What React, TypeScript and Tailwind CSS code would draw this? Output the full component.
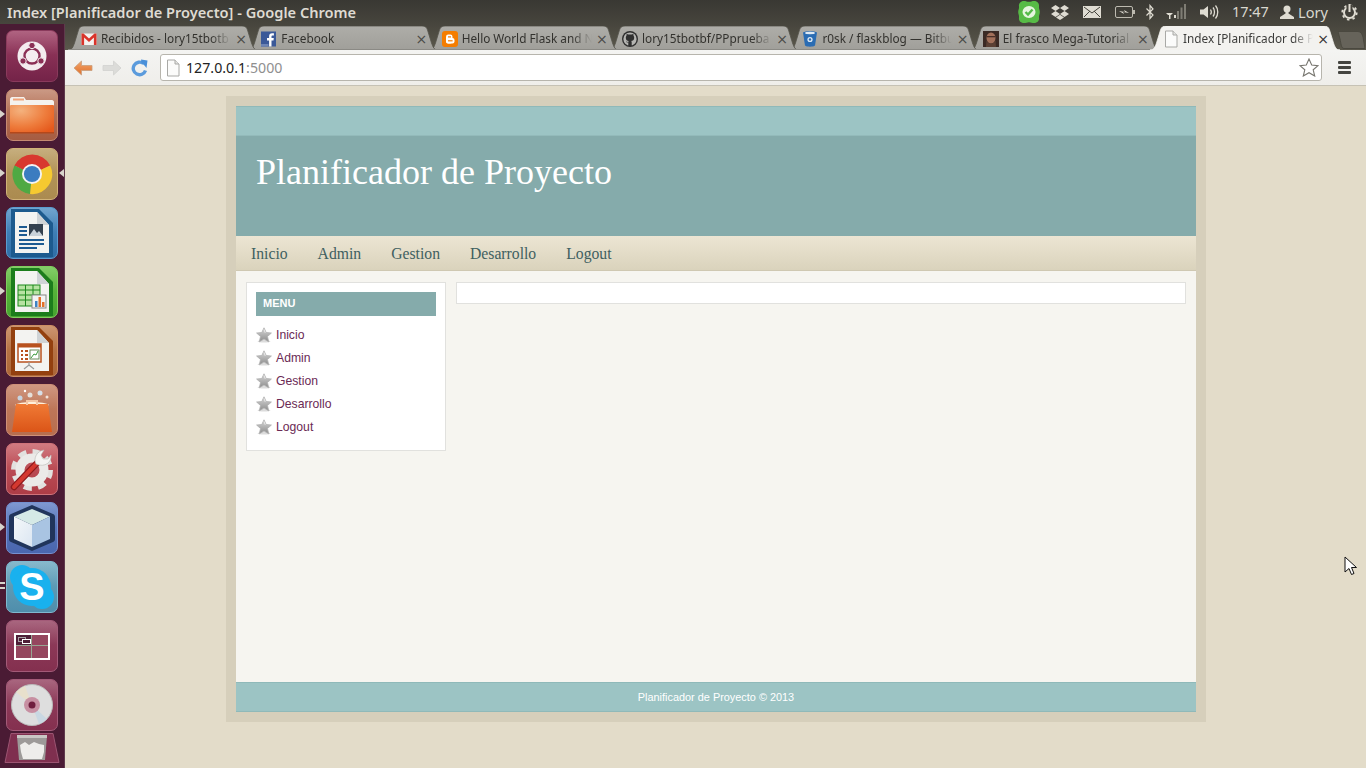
import React from "react";

const ubuntu = { fontFamily: '"Noto Sans", "Open Sans", sans-serif' };

const DocIcon = () => (
  <svg width="14" height="18" viewBox="0 0 14 18">
    <path d="M1.500 1H9l4 4v12H1.500z" fill="#fbfbfa" stroke="#a9a9a6" />
    <path d="M9 1v4h4" fill="#e4e4e2" stroke="#a9a9a6" />
  </svg>
);

const GmailIcon = () => (
  <svg width="16" height="16" viewBox="0 0 16 16">
    <rect x="0.500" y="2.500" width="15" height="11.500" fill="#f4f2f0" />
    <path d="M0.500 14V2.500h2L8 7.500l5.500-5h2V14h-2.600V6.600L8 11 3.100 6.600V14z" fill="#d9342b" />
  </svg>
);

const FacebookIcon = () => (
  <svg width="16" height="16" viewBox="0 0 16 16">
    <rect width="15" height="15" y="0.500" fill="#3b5998" />
    <path d="M10.500 15.500V9.400h2l.3-2.400h-2.300V5.600c0-.7.3-1.100 1.100-1.100h1.300V2.300c-.4 0-1-.1-1.800-.1-1.900 0-3 1.100-3 3V7H6v2.400h2.100v6.100z" fill="#fff" />
    <rect y="13" width="7.500" height="2.500" fill="#6d84b4" />
  </svg>
);

const BloggerIcon = () => (
  <svg width="16" height="16" viewBox="0 0 16 16">
    <rect width="16" height="16" rx="3" fill="#f57d00" />
    <rect x="4" y="3.500" width="6.500" height="9" rx="2.200" fill="#fff" />
    <rect x="4" y="7" width="8.500" height="5.500" rx="2" fill="#fff" />
    <rect x="6" y="5.300" width="3" height="1.200" fill="#f57d00" />
    <rect x="6" y="9.200" width="4.600" height="1.200" fill="#f57d00" />
  </svg>
);

const GithubIcon = () => (
  <svg width="16" height="16" viewBox="0 0 16 16">
    <circle cx="8" cy="8" r="8" fill="#2f2f2f" />
    <circle cx="8" cy="8" r="6.600" fill="#b5b5b2" />
    <path d="M3.800 6.800c0-1 .3-1.600.7-2.100-.1-.5-.1-1.200.2-1.800.8 0 1.400.4 1.800.7.9-.2 2-.2 3 0 .4-.3 1-.7 1.800-.7.3.6.3 1.300.2 1.800.4.5.7 1.100.7 2.100 0 2.300-1.400 3.100-3 3.300.3.300.5.700.5 1.300V15H6.300v-3.600C5.100 11.700 4.400 11 4 10.400l1.200.4c.4.300.8.600 1.100.2 0-.4.200-.7.400-.9-1.600-.2-2.900-1-2.900-3.300z" fill="#2f2f2f" />
  </svg>
);

const BitbucketIcon = () => (
  <svg width="16" height="18" viewBox="0 0 16 18">
    <path d="M1 2.500C3 .8 13 .8 15 2.500l-2 13c-1.500 1.600-8.500 1.600-10 0z" fill="#2a6cb3" />
    <ellipse cx="8" cy="3" rx="5" ry="1.200" fill="#dfeaf4" />
    <circle cx="8" cy="9.500" r="2.600" fill="#dfeaf4" />
    <circle cx="8" cy="9.500" r="1.200" fill="#2a6cb3" />
  </svg>
);

const PhotoIcon = () => (
  <svg width="16" height="16" viewBox="0 0 16 16">
    <rect width="16" height="16" fill="#3b2a24" />
    <ellipse cx="8" cy="7" rx="4.500" ry="5.500" fill="#a2705a" />
    <rect x="3.500" y="5" width="9" height="1.300" fill="#4a3028" />
    <path d="M3.500 9c1 5 8 5 9 0l.5 7H3z" fill="#5b4034" />
  </svg>
);

const tabs = [
  { title: "Recibidos - lory15tbotb", icon: <GmailIcon /> },
  { title: "Facebook", icon: <FacebookIcon /> },
  { title: "Hello World Flask and N", icon: <BloggerIcon /> },
  { title: "lory15tbotbf/PPprueba", icon: <GithubIcon /> },
  { title: "r0sk / flaskblog — Bitbu", icon: <BitbucketIcon /> },
  { title: "El frasco Mega-Tutorial", icon: <PhotoIcon /> },
];

const TabShape = ({ active }: { active?: boolean }) => (
  <svg className="absolute inset-0" width="190" height="24" viewBox="0 0 190 24">
    <defs>
      <linearGradient id="tabIdle" x1="0" y1="0" x2="0" y2="1">
        <stop offset="0" stopColor="#aeada8" />
        <stop offset="1" stopColor="#a09f9a" />
      </linearGradient>
    </defs>
    <path
      d="M0 24C4 24 5 21 6.500 17L10.500 4C11.500 1 13 0 16 0H174C177 0 178.500 1 179.500 4L183.500 17C185 21 186 24 190 24Z"
      fill={active ? "#f3f2ef" : "url(#tabIdle)"}
      stroke={active ? "#f3f2ef" : "#56544b"}
      strokeWidth="0.800"
    />
    {!active && <rect x="0" y="23" width="190" height="1" fill="#8b8a85" />}
  </svg>
);

const Tab = ({ title, icon, index, active }: { title: string; icon: React.ReactNode; index: number; active?: boolean }) => (
  <div className="relative w-[190px] h-[24px] shrink-0 -ml-[9.67px] first:ml-0" style={{ zIndex: active ? 20 : 10 - index }}>
    <TabShape active={active} />
    <div className="relative h-full flex items-center pl-[13px] pr-[11px] pt-[1px]">
      <div className="w-[16px] h-[18px] flex items-center justify-center shrink-0">{icon}</div>
      <span
        style={ubuntu}
        className={`ml-[4px] w-[134px] text-[11.800px] whitespace-nowrap overflow-hidden [mask-image:linear-gradient(to_right,black_82%,transparent_97%)] ${active ? "text-[#3c3c3a]" : "text-[#33322e]"}`}
      >
        {title}
      </span>
      <span className={`ml-auto text-[14px] leading-none ${active ? "text-[#333]" : "text-[#4a4a47]"}`} style={{ fontFamily: '"DejaVu Sans", sans-serif' }}>
        ×
      </span>
    </div>
  </div>
);

const StatusIcons = () => (
  <div className="flex items-center h-full ml-auto">
    <svg width="22" height="24" viewBox="0 0 22 24">
      <path d="M6 1c2 0 3 .8 5 .8S14 1 16 1c3.500 0 5.500 2.500 5 5.500-.3 2 .8 3.500.8 5.500s-1 3.500-.8 5.500c.5 3-1.500 5.500-5 5.500-2 0-3-.8-5-.8S8 23 6 23c-3.500 0-5.500-2.500-5-5.500.3-2-.8-3.500-.8-5.500S1.300 8.500 1 6.500C.5 3.500 2.500 1 6 1z" fill="#57bb46" />
      <ellipse cx="11" cy="12" rx="6.500" ry="6" fill="#e6f5df" />
      <path d="M7.500 12l2.500 2.500 4.500-5" fill="none" stroke="#54b948" strokeWidth="2.400" />
    </svg>
    <svg className="ml-[11px]" width="18" height="16" viewBox="0 0 18 16">
      <path d="M4.500 1L9 4 4.500 7 0 4zM13.500 1L18 4l-4.500 3L9 4zM4.500 7L9 10l-4.500 3L0 10zM13.500 7L18 10l-4.500 3L9 10zM9 10.800L13 13.500 9 16 5 13.500z" fill="#dfdcd2" />
    </svg>
    <svg className="ml-[14px]" width="18" height="12" viewBox="0 0 18 12">
      <rect width="18" height="12" fill="#dfdcd2" />
      <path d="M1 1l8 6 8-6M1 11l6-6M17 11l-6-6" stroke="#45433b" fill="none" />
    </svg>
    <svg className="ml-[14px]" width="20" height="12" viewBox="0 0 20 12">
      <rect x="0.500" y="0.500" width="17" height="11" rx="1.500" fill="none" stroke="#bdbab0" />
      <rect x="18" y="4" width="2" height="4" fill="#bdbab0" />
      <path d="M4 5l6 1-1-2 5 3-6-1 1 2z" fill="#dfdcd2" />
    </svg>
    <svg className="ml-[11px]" width="8" height="16" viewBox="0 0 8 16">
      <path d="M0.500 4.500L7 11l-3 3.500V1.500L7 5 .5 11.500" fill="none" stroke="#dfdcd2" strokeWidth="1.200" />
    </svg>
    <svg className="ml-[12px]" width="20" height="16" viewBox="0 0 20 16">
      <rect x="8" y="11" width="2" height="3" fill="#dfdcd2" />
      <path d="M0 9h7L5 11H2z" fill="#dfdcd2" />
      <rect x="3" y="11" width="1.500" height="4" fill="#dfdcd2" />
      <rect x="11" y="7" width="2" height="8" fill="#7f7d74" />
      <rect x="14.500" y="3.500" width="2" height="11.500" fill="#7f7d74" />
      <rect x="18" y="0" width="2" height="15" fill="#7f7d74" />
    </svg>
    <svg className="ml-[14px]" width="20" height="16" viewBox="0 0 20 16">
      <path d="M0 5.500h3.500L8 2v12l-4.500-3.500H0z" fill="#dfdcd2" />
      <path d="M10.500 5.500c1 1.500 1 3.500 0 5M13 3.500c2 2.500 2 6.500 0 9M15.500 1.500c3 3.500 3 9.500 0 13" fill="none" stroke="#dfdcd2" strokeWidth="1.300" />
    </svg>
    <span style={ubuntu} className="ml-[12px] w-[37px] text-[14.400px] leading-none text-[#d9d8cf] whitespace-nowrap">17:47</span>
    <svg className="ml-[11px]" width="14" height="14" viewBox="0 0 14 14">
      <circle cx="7" cy="4" r="3.500" fill="#dfdcd2" />
      <path d="M5.500 7h3v1.500L14 12v2H0v-2l5.500-3.500z" fill="#dfdcd2" />
    </svg>
    <span style={ubuntu} className="ml-[4px] w-[31px] text-[14.600px] leading-none text-[#d9d8cf] whitespace-nowrap">Lory</span>
    <svg className="ml-[12px] mr-[8px]" width="17" height="17" viewBox="0 0 17 17">
      <circle cx="8.500" cy="8.500" r="5.500" fill="none" stroke="#dfdcd2" strokeWidth="2" />
      <circle cx="8.500" cy="8.500" r="7.200" fill="none" stroke="#dfdcd2" strokeWidth="1.800" strokeDasharray="2.500 3.150" />
      <rect x="5.500" y="1" width="6" height="4" fill="#45433b" />
      <rect x="7.500" y="0" width="2" height="8" fill="#dfdcd2" />
    </svg>
  </div>
);

const Toolbar = () => (
  <div className="h-[36px] bg-linear-to-b from-[#f4f4f2] to-[#efeeea] border-b border-[#c6c2b5] flex items-center">
    <svg className="ml-[8px]" width="20" height="18" viewBox="0 0 20 18">
      <defs>
        <linearGradient id="backArrow" x1="0" y1="0" x2="0" y2="1">
          <stop offset="0" stopColor="#f2a56c" />
          <stop offset="1" stopColor="#e0702a" />
        </linearGradient>
      </defs>
      <path d="M8.500 2L1 9l7.500 7v-4.500H19v-5H8.500z" fill="url(#backArrow)" stroke="#c9a07e" strokeWidth="0.800" strokeLinejoin="round" />
    </svg>
    <svg className="ml-[9px]" width="20" height="18" viewBox="0 0 20 18">
      <path d="M11.500 2L19 9l-7.500 7v-4.500H1v-5h10.500z" fill="#dcdcd9" stroke="#d2d2cf" strokeWidth="0.800" strokeLinejoin="round" />
    </svg>
    <svg className="ml-[9px]" width="18" height="18" viewBox="0 0 18 18">
      <path d="M14.500 11.500A6.300 6.300 0 1 1 12.500 4.500" fill="none" stroke="#5b9bdc" strokeWidth="3.400" />
      <path d="M10 0.500l6.500 1-1 7.500-2-2.500-3-2.500z" fill="#4a90d9" />
    </svg>
    <div className="ml-[11px] w-[1162px] h-[27px] rounded-[3px] bg-white border border-[#b7b5ad] flex items-center">
      <div className="ml-[5px]">
        <DocIcon />
      </div>
      <span style={ubuntu} className="ml-[6px] text-[14.200px] text-[#222]">
        127.0.0.1<span className="text-[#8f8f8f]">:5000</span>
      </span>
      <svg className="ml-auto mr-[2px]" width="20" height="19" viewBox="0 0 20 19">
        <path d="M10 1l2.700 6 6.300.6-4.800 4.200 1.500 6.200L10 14.700 4.300 18l1.500-6.200L1 7.600 7.300 7z" fill="#fff" stroke="#77766f" strokeWidth="1.100" />
      </svg>
    </div>
    <div className="ml-[16px] w-[13px] flex flex-col gap-[2px]">
      <div className="h-[3px] rounded-[1px] bg-[#44443f]" />
      <div className="h-[3px] rounded-[1px] bg-[#44443f]" />
      <div className="h-[3px] rounded-[1px] bg-[#44443f]" />
    </div>
  </div>
);

const Tile = ({ className, children }: { className: string; children: React.ReactNode }) => (
  <div className={`relative w-[52px] h-[52px] rounded-[7px] border flex items-center justify-center overflow-hidden shrink-0 ${className}`}>
    <div className="absolute inset-x-0 top-0 h-[24px] bg-linear-to-b from-white/20 to-transparent" />
    <div className="relative flex items-center justify-center">{children}</div>
  </div>
);

const Launcher = () => (
  <div className="relative w-[65px] shrink-0 bg-[#4a1b34] pl-[6px] pt-[6px] flex flex-col gap-[7px] border-r border-[#5f3a4c]">
    <Tile className="bg-linear-to-b from-[#9c3d62] to-[#742348] border-[#8a3a5c]">
      <svg width="32" height="32" viewBox="0 0 32 32">
        <circle cx="16" cy="16" r="14.500" fill="#f4ecef" />
        <circle cx="16" cy="16" r="7.500" fill="none" stroke="#8b2f55" strokeWidth="2.400" />
        <circle cx="16" cy="5.500" r="3.200" fill="#8b2f55" stroke="#f4ecef" />
        <circle cx="7" cy="21" r="3.200" fill="#8b2f55" stroke="#f4ecef" />
        <circle cx="25" cy="21" r="3.200" fill="#8b2f55" stroke="#f4ecef" />
      </svg>
    </Tile>
    <Tile className="bg-linear-to-b from-[#bd7f65] to-[#a65c41] border-[#c58a72]">
      <svg width="44" height="38" viewBox="0 0 44 38">
        <defs>
          <radialGradient id="folderBody" cx="0.250" cy="0.200" r="0.950">
            <stop offset="0" stopColor="#f4b27e" />
            <stop offset="0.600" stopColor="#ee7c3c" />
            <stop offset="1" stopColor="#e5591c" />
          </radialGradient>
        </defs>
        <path d="M0 3c0-1 1-2 2-2h12l2 3h26c1 0 2 1 2 2v6H0z" fill="#f4f2ee" />
        <rect x="3" y="2.500" width="11" height="2" fill="#f0a37a" />
        <rect y="9" width="44" height="28" rx="1" fill="url(#folderBody)" />
        <rect y="36" width="44" height="1.500" fill="#b5481a" />
      </svg>
    </Tile>
    <Tile className="bg-linear-to-b from-[#b89a5e] to-[#ab8b50] border-[#d0b278]">
      <svg width="42" height="42" viewBox="0 0 44 44">
        <path d="M22 22L3.600 13A21 21 0 0 1 41 13z" fill="#d8382f" />
        <path d="M22 22L3.600 13A21 21 0 0 0 20 43z" fill="#4fa943" />
        <path d="M22 22L41 13A21 21 0 0 1 20 43z" fill="#f6c930" />
        <circle cx="22" cy="22" r="10.500" fill="#f3f3f3" />
        <circle cx="22" cy="22" r="8.500" fill="#3b7cc0" />
      </svg>
    </Tile>
    <Tile className="bg-linear-to-b from-[#4f8fc4] to-[#2e6da6] border-[#5a9ccf]">
      <svg width="42" height="48" viewBox="0 0 42 48">
        <path d="M0 0h28l14 14v34H0z" fill="#1d5a8e" />
        <path d="M4 3h22l12 13v28H4z" fill="#f3f3f1" />
        <path d="M26 3l12 13H26z" fill="#cfd3d6" />
        <rect x="8" y="17" width="8" height="2" fill="#1d5a92" />
        <rect x="8" y="21" width="8" height="2" fill="#1d5a92" />
        <rect x="8" y="25" width="8" height="2" fill="#1d5a92" />
        <rect x="18" y="15" width="14" height="12" fill="#33404f" />
        <path d="M18 27l5-7 3 4 2-2 4 5z" fill="#c9d2da" />
        <rect x="8" y="30" width="25" height="2" fill="#1d5a92" />
        <rect x="8" y="34" width="25" height="2" fill="#1d5a92" />
        <rect x="8" y="38" width="18" height="2" fill="#1d5a92" />
      </svg>
    </Tile>
    <Tile className="bg-linear-to-b from-[#66c044] to-[#45a42f] border-[#7fce5f]">
      <svg width="42" height="48" viewBox="0 0 42 48">
        <path d="M0 0h28l14 14v34H0z" fill="#1c7d1c" />
        <path d="M4 3h22l12 13v28H4z" fill="#f3f3f1" />
        <path d="M26 3l12 13H26z" fill="#cfd3d6" />
        <rect x="7" y="17" width="22" height="21" fill="#b7e3a3" stroke="#1c8a1c" />
        <path d="M7 22h22M7 27h22M7 32h22M14.500 17v21M22 17v21" stroke="#1c8a1c" />
        <rect x="21" y="27" width="14" height="13" fill="#f4f4f4" stroke="#888" />
        <rect x="24" y="33" width="2.500" height="6" fill="#3f82c4" />
        <rect x="27.500" y="29" width="2.500" height="10" fill="#e2702a" />
        <rect x="31" y="34" width="2.500" height="5" fill="#e2702a" />
      </svg>
    </Tile>
    <Tile className="bg-linear-to-b from-[#c07d4f] to-[#ab6637] border-[#cd8e63]">
      <svg width="42" height="48" viewBox="0 0 42 48">
        <path d="M0 0h28l14 14v34H0z" fill="#93400f" />
        <path d="M4 3h22l12 13v28H4z" fill="#f3f3f1" />
        <path d="M26 3l12 13H26z" fill="#cfd3d6" />
        <rect x="7" y="17" width="23" height="18" fill="#fff" stroke="#b8521f" strokeWidth="1.500" />
        <rect x="7" y="17" width="23" height="3.500" fill="#b8521f" />
        <path d="M10 24h2M10 28h2M10 32h2M14 24h3M14 28h3M14 32h3" stroke="#b8521f" strokeWidth="2" />
        <rect x="19" y="23" width="9" height="9" fill="#fff" stroke="#6a8a5a" />
        <path d="M20 31l3-4 2 1 2-4" stroke="#3a9a3a" fill="none" />
        <path d="M18 35v4M18 38l-5 4M18 38l5 4" stroke="#9a9a9a" strokeWidth="1.200" />
      </svg>
    </Tile>
    <Tile className="bg-linear-to-b from-[#c47e62] to-[#b76e4e] border-[#cf9078]">
      <svg width="44" height="46" viewBox="0 0 44 46">
        <defs>
          <linearGradient id="bagBody" x1="0" y1="0" x2="0" y2="1">
            <stop offset="0" stopColor="#f07a35" />
            <stop offset="1" stopColor="#db5518" />
          </linearGradient>
        </defs>
        <circle cx="10" cy="11" r="2.500" fill="#c7d4e0" />
        <circle cx="20" cy="8" r="2.500" fill="#e5e0da" />
        <circle cx="30" cy="6" r="2.500" fill="#d8dfe6" />
        <circle cx="37" cy="10" r="1.500" fill="#f2e4da" />
        <circle cx="15" cy="4" r="1.200" fill="#fff" />
        <path d="M5 18c4-4 30-4 34 0-5 3-29 3-34 0z" fill="#fff0da" />
        <path d="M6 17h32l4 28H2z" fill="url(#bagBody)" />
        <path d="M17 18v-4h10v4" fill="none" stroke="#f3c7a6" strokeWidth="2" />
      </svg>
    </Tile>
    <Tile className="bg-linear-to-b from-[#c65a62] to-[#ae3d47] border-[#d0737a]">
      <svg width="46" height="46" viewBox="0 0 46 46">
        <circle cx="23" cy="24" r="18" fill="none" stroke="#e2e1df" strokeWidth="6" strokeDasharray="8 6.140" />
        <circle cx="23" cy="24" r="12" fill="none" stroke="#ebeae8" strokeWidth="9" />
        <path d="M5 41L30 15" stroke="#8c1a1c" strokeWidth="6.500" strokeLinecap="round" />
        <path d="M5 41L30 15" stroke="#d4382f" strokeWidth="4" strokeLinecap="round" />
        <path d="M27 18c-3-6 1-13 8-14l-3 5 2 4 5 0 3-4c1 7-6 13-15 9z" fill="#f4f4f2" stroke="#b8b8b6" strokeWidth="0.600" />
      </svg>
    </Tile>
    <Tile className="bg-linear-to-b from-[#5f7ec4] to-[#4a66ae] border-[#7590d0]">
      <svg width="46" height="48" viewBox="0 0 46 48">
        <defs>
          <linearGradient id="cubeLeft" x1="0" y1="0" x2="1" y2="1">
            <stop offset="0" stopColor="#f5f8fa" />
            <stop offset="1" stopColor="#dbe6f2" />
          </linearGradient>
        </defs>
        <path d="M23 1L44 10c1.500 .6 2 1.500 2 3v22c0 1.500-.5 2.400-2 3L23 47 2 38c-1.500-.6-2-1.500-2-3V13c0-1.500.5-2.400 2-3z" fill="#21355c" />
        <path d="M23 5L41 12.500 23 21 5 12.500z" fill="#d5e9e6" />
        <path d="M5 12.500L23 21v22L5 35z" fill="url(#cubeLeft)" />
        <path d="M41 12.500L23 21v22l18-8z" fill="#a9c4e2" />
      </svg>
    </Tile>
    <Tile className="bg-linear-to-b from-[#6aa7bf] to-[#4f8eab] border-[#7fb9cf]">
      <div className="relative w-[44px] h-[44px] flex items-center justify-center">
        <div className="absolute left-0 top-0 w-[24px] h-[24px] rounded-full bg-[#19b1ee]" />
        <div className="absolute right-0 bottom-0 w-[24px] h-[24px] rounded-full bg-[#19b1ee]" />
        <div className="absolute inset-[3px] rounded-full bg-[#19b1ee]" />
        <span className="relative text-white text-[38px] leading-none font-bold" style={{ fontFamily: '"Liberation Sans", sans-serif' }}>
          S
        </span>
      </div>
    </Tile>
    <Tile className="bg-linear-to-b from-[#93405f] to-[#84304f] border-[#a35a78]">
      <div className="relative w-[36px] h-[27px] border-2 border-white grid grid-cols-2 grid-rows-2 bg-[#95475f]">
        <div className="bg-[#4f1f38] border-r border-b border-[#97a592]" />
        <div className="border-b border-[#97a592]" />
        <div className="border-r border-[#97a592]" />
        <div />
        <div className="absolute left-[2px] top-[2px] w-[8px] h-[5px] border border-[#a8a0a4]" />
        <div className="absolute left-[6px] top-[4px] w-[9px] h-[5px] border border-white bg-[#4f1f38]" />
      </div>
    </Tile>
    <Tile className="bg-linear-to-b from-[#93405f] to-[#84304f] border-[#a35a78]">
      <svg width="42" height="42" viewBox="0 0 42 42">
        <circle cx="21" cy="21" r="20.500" fill="#dedede" stroke="#bbb" />
        <path d="M21 21L5 8A21 21 0 0 1 14 2z" fill="#e8e0cc" />
        <path d="M21 21L36 35A21 21 0 0 1 28 40z" fill="#c9d8e2" />
        <circle cx="21" cy="21" r="8" fill="#c78fa2" />
        <circle cx="21" cy="21" r="3.500" fill="#701d3e" />
      </svg>
    </Tile>
    <div className="relative -mt-[5px] -ml-[2px] w-[56px] h-[30px] shrink-0 flex justify-center">
      <svg className="absolute inset-0" width="56" height="30" viewBox="0 0 56 30">
        <path d="M7 0.500H49L55 29.500H1z" fill="#7f2f4f" stroke="#9c5472" />
      </svg>
      <svg className="relative" width="32" height="28" viewBox="0 0 32 28">
        <path d="M1 3h30l-2 24H3z" fill="#9d9a99" />
        <rect x="1" y="2" width="30" height="3" fill="#c9c7c5" />
        <path d="M4 12l5-3 4 3 5-3 5 2 5 1 0 7-2 7H7l-2-7z" fill="#eeedeb" />
      </svg>
    </div>
    <div className="absolute left-0 top-[86px] w-0 h-0 border-y-[4px] border-y-transparent border-l-[5px] border-l-[#d8d4cc]" />
    <div className="absolute left-0 top-[145px] w-0 h-0 border-y-[4px] border-y-transparent border-l-[5px] border-l-[#d8d4cc]" />
    <div className="absolute right-0 top-[145px] w-0 h-0 border-y-[4px] border-y-transparent border-r-[5px] border-r-[#d8d4cc]" />
    <div className="absolute left-0 top-[263px] w-0 h-0 border-y-[4px] border-y-transparent border-l-[5px] border-l-[#d8d4cc]" />
    <div className="absolute left-0 top-[499px] w-0 h-0 border-y-[4px] border-y-transparent border-l-[5px] border-l-[#d8d4cc]" />
    <div className="absolute left-0 top-[558px] w-[5px] h-[2px] bg-[#d8d4cc]" />
    <div className="absolute left-0 top-[563px] w-[5px] h-[2px] bg-[#d8d4cc]" />
  </div>
);

const MenuStar = () => (
  <svg width="16" height="16" viewBox="0 0 16 16">
    <defs>
      <linearGradient id="menuStar" x1="0" y1="0" x2="0" y2="1">
        <stop offset="0" stopColor="#d8d8d8" />
        <stop offset="1" stopColor="#8c8c8c" />
      </linearGradient>
    </defs>
    <ellipse cx="8" cy="14.300" rx="6.500" ry="1.300" fill="#dcdcdc" />
    <path d="M8 0.800l2.200 4.700 5.200.5-3.900 3.500 1.200 5.300L8 12.100l-4.700 2.700 1.200-5.300L.6 6l5.200-.5z" fill="url(#menuStar)" stroke="#b0b0b0" strokeWidth="0.800" strokeLinejoin="round" />
    <path d="M8 2.500l1.200 3.300" stroke="#f2f2f2" strokeWidth="0.800" fill="none" />
  </svg>
);

const navItems = ["Inicio", "Admin", "Gestion", "Desarrollo", "Logout"];

const Page = () => (
  <div className="flex-1 bg-[#e3dcc9] pt-[10px] pl-[161px] overflow-hidden">
    <div className="w-[980px] h-[626px] bg-[#d6cfbb] p-[10px]">
      <div className="h-full flex flex-col">
        <div className="h-[30px] bg-[#9cc4c4] border-t border-[#8fb9b9] border-b border-b-[#93baba]" />
        <div className="h-[100px] bg-[#85abab] px-[20px] pt-[13px]">
          <h1 className="text-[36px] leading-[46px] text-white" style={{ fontFamily: '"Liberation Serif", serif' }}>
            Planificador de Proyecto
          </h1>
        </div>
        <div
          className="h-[35px] bg-linear-to-b from-[#ece5d3] to-[#dad3bc] border-b border-[#cfc8b2] flex items-center gap-[30px] pl-[15px] pt-[1px] text-[15.700px] text-[#3f6060]"
          style={{ fontFamily: '"Liberation Serif", serif' }}
        >
          {navItems.map((item) => (
            <span key={item}>{item}</span>
          ))}
        </div>
        <div className="flex-1 bg-[#f6f5f0] flex items-start gap-[10px] pt-[11px] pl-[10px]" style={{ fontFamily: '"Liberation Sans", sans-serif' }}>
          <div className="w-[200px] h-[169px] bg-white border border-[#e1e1de] pt-[9px] px-[9px]">
            <div className="h-[24px] bg-[#85abab] pl-[7px] pb-[1px] flex items-center text-[11px] font-bold text-white">MENU</div>
            <ul className="mt-[7px] flex flex-col">
              {navItems.map((item) => (
                <li key={item} className="h-[23px] flex items-center gap-[4px] text-[12.200px] text-[#6b2a55]">
                  <MenuStar />
                  <span className="pt-[2px]">{item}</span>
                </li>
              ))}
            </ul>
          </div>
          <div className="w-[730px] h-[22px] bg-white border border-[#e1e1de]" />
        </div>
        <div
          className="h-[30px] bg-[#9cc4c4] border-t border-b border-[#8fb9b9] flex items-center justify-center text-[10.900px] text-white"
          style={{ fontFamily: '"Liberation Sans", sans-serif' }}
        >
          Planificador de Proyecto © 2013
        </div>
      </div>
    </div>
  </div>
);

export default function App() {
  return (
    <div className="relative w-[1366px] h-[768px] overflow-hidden flex flex-col">
      <div className="h-[24px] shrink-0 bg-linear-to-b from-[#393833] to-[#47453d] flex items-center pl-[7px]">
        <span style={ubuntu} className="text-[14.600px] font-semibold leading-none text-[#dfdbd2] whitespace-nowrap">
          Index [Planificador de Proyecto] - Google Chrome
        </span>
        <StatusIcons />
      </div>
      <div className="flex-1 flex min-h-0">
        <Launcher />
        <div className="flex-1 flex flex-col min-w-0">
          <div className="h-[26px] shrink-0 bg-linear-to-b from-[#47453d] to-[#5b584c] flex items-end pl-[3px]">
            {tabs.map((tab, i) => (
              <Tab key={tab.title} title={tab.title} icon={tab.icon} index={i} />
            ))}
            <Tab title="Index [Planificador de P" icon={<DocIcon />} index={6} active />
            <svg className="-ml-[2px] mb-[1px]" width="27" height="18" viewBox="0 0 27 18">
              <path d="M0 0.500H20C23 0.500 24 3 25 6L27 17.500H6C3 17.500 3 12 2 8z" fill="#66635a" stroke="#4a483f" />
            </svg>
          </div>
          <Toolbar />
          <Page />
        </div>
      </div>
      <svg className="absolute left-[1344px] top-[556px]" width="13" height="20" viewBox="0 0 13 20">
        <path d="M1 1v15l4-3.500 2.500 6 2.500-1-2.500-6H12.500z" fill="#fff" stroke="#111" />
      </svg>
    </div>
  );
}
